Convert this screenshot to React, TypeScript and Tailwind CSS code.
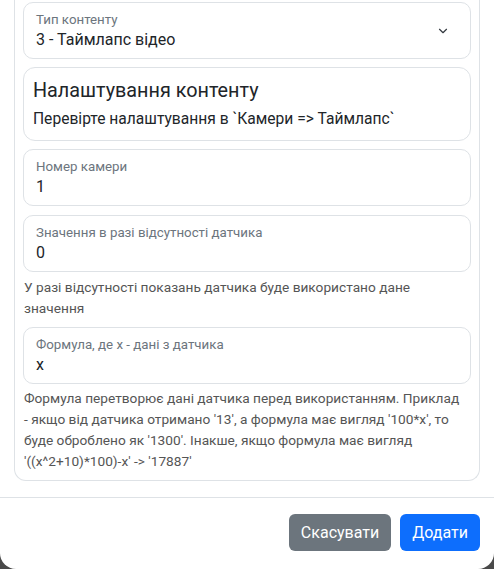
import { ChevronDown } from 'lucide-react'

function FloatingField({ label, value, select }: { label: string; value: string; select?: boolean }) {
  return (
    <div className="relative flex h-[57px] shrink-0 flex-col justify-center rounded-[10px] border border-[#dee2e6] bg-white pl-3 pr-10">
      <span className="text-[13.3px] leading-[18px] text-[#6c757d]">{label}</span>
      <span className="text-[16px] leading-[22px] text-[#212529]">{value}</span>
      {select && (
        <ChevronDown className="absolute right-[20px] top-[21px] size-[14px] text-[#343a40]" strokeWidth={2} />
      )}
    </div>
  )
}

function HelpText({ children }: { children: string }) {
  return <p className="pl-[1px] pr-[6px] text-[13.7px] leading-[21px] text-[#555]">{children}</p>
}

export default function App() {
  return (
    <div className="h-[569px] w-[494px] overflow-hidden bg-[#4a4a4a] font-['Roboto',sans-serif]">
      <div className="flex h-full flex-col rounded-b-[16px] bg-white">
        <div className="px-[14px] pb-4">
          <div className="flex flex-col rounded-b-[12px] border-x border-b border-[#dee2e6] px-2 pb-2 pt-[2px]">
            <FloatingField label="Тип контенту" value="3 - Таймлапс відео" select />

            <div className="mt-[8px] flex h-[74px] flex-col justify-center rounded-[12px] border border-[#dee2e6] px-[9px] text-[#212529]">
              <p className="text-[19.8px] leading-[26px]">Налаштування контенту</p>
              <p className="mt-[4px] text-[15.6px] leading-[22px]">Перевірте налаштування в `Камери =&gt; Таймлапс`</p>
            </div>

            <div className="mt-[8px]">
              <FloatingField label="Номер камери" value="1" />
            </div>

            <div className="mt-[9px]">
              <FloatingField label="Значення в разі відсутності датчика" value="0" />
            </div>
            <div className="mt-[5px]">
              <HelpText>У разі відсутності показань датчика буде використано дане значення</HelpText>
            </div>

            <div className="mt-[8px]">
              <FloatingField label="Формула, де x - дані з датчика" value="x" />
            </div>
            <div className="mt-[4px]">
              <HelpText>
                Формула перетворює дані датчика перед використанням. Приклад - якщо від датчика отримано '13', а формула має вигляд '100*x', то буде оброблено як '1300'. Інакше, якщо формула має вигляд '((x^2+10)*100)-x' -&gt; '17887'
              </HelpText>
            </div>
          </div>
        </div>

        <div className="flex justify-end gap-[9px] border-t border-[#dee2e6] px-[14px] pt-4">
          <button className="h-[37px] rounded-[6px] bg-[#6c757d] px-3 text-[16px] text-white">Скасувати</button>
          <button className="h-[37px] rounded-[6px] bg-[#0d6efd] px-3 text-[16px] text-white">Додати</button>
        </div>
      </div>
    </div>
  )
}
